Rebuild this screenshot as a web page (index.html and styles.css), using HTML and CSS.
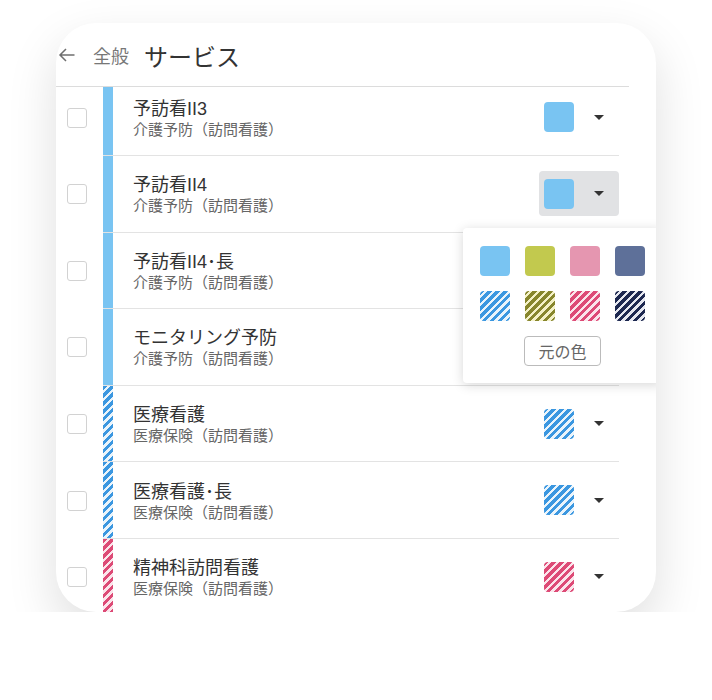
FILE: index.html
```html
<!DOCTYPE html>
<html lang="ja">
<head>
  <meta charset="UTF-8" />
  <title>サービス</title>
  <link rel="stylesheet" href="styles.css">
</head>
<body>

  <div class="stage">
    <div class="card">
      <header class="top-bar">
        <svg class="back" width="18" height="18" viewBox="0 0 18 18">
          <path d="M16.5 9H2M8 3L2 9l6 6" fill="none" stroke="#6f6f6f" stroke-width="1.5" />
        </svg>
        <span class="crumb">全般</span>
        <h1 class="page-title">サービス</h1>
      </header>

      <div class="list">
        <ul class="rows">
          <li class="row">
            <span class="check"></span>
            <div class="row-main">
              <span class="bar c-sky"></span>
              <div class="names">
                <div class="name">予訪看II3</div>
                <div class="kind">介護予防（訪問看護）</div>
              </div>
              <button class="color-btn"><span class="swatch c-sky"></span><span class="caret"></span></button>
            </div>
          </li>
          <li class="row">
            <span class="check"></span>
            <div class="row-main">
              <span class="bar c-sky"></span>
              <div class="names">
                <div class="name">予訪看II4</div>
                <div class="kind">介護予防（訪問看護）</div>
              </div>
              <button class="color-btn active"><span class="swatch c-sky"></span><span class="caret"></span></button>
            </div>
          </li>
          <li class="row">
            <span class="check"></span>
            <div class="row-main">
              <span class="bar c-sky"></span>
              <div class="names">
                <div class="name">予訪看II4･長</div>
                <div class="kind">介護予防（訪問看護）</div>
              </div>
              <button class="color-btn"><span class="swatch c-sky"></span><span class="caret"></span></button>
            </div>
          </li>
          <li class="row">
            <span class="check"></span>
            <div class="row-main">
              <span class="bar c-sky"></span>
              <div class="names">
                <div class="name">モニタリング予防</div>
                <div class="kind">介護予防（訪問看護）</div>
              </div>
              <button class="color-btn"><span class="swatch c-sky"></span><span class="caret"></span></button>
            </div>
          </li>
          <li class="row">
            <span class="check"></span>
            <div class="row-main">
              <span class="bar s-sky"></span>
              <div class="names">
                <div class="name">医療看護</div>
                <div class="kind">医療保険（訪問看護）</div>
              </div>
              <button class="color-btn"><span class="swatch s-sky"></span><span class="caret"></span></button>
            </div>
          </li>
          <li class="row">
            <span class="check"></span>
            <div class="row-main">
              <span class="bar s-sky"></span>
              <div class="names">
                <div class="name">医療看護･長</div>
                <div class="kind">医療保険（訪問看護）</div>
              </div>
              <button class="color-btn"><span class="swatch s-sky"></span><span class="caret"></span></button>
            </div>
          </li>
          <li class="row">
            <span class="check"></span>
            <div class="row-main">
              <span class="bar s-rose"></span>
              <div class="names">
                <div class="name">精神科訪問看護</div>
                <div class="kind">医療保険（訪問看護）</div>
              </div>
              <button class="color-btn"><span class="swatch s-rose"></span><span class="caret"></span></button>
            </div>
          </li>
        </ul>
      </div>

      <!-- color picker opened from the 2nd row -->
      <div class="palette">
        <div class="palette-grid">
          <span class="swatch c-sky"></span>
          <span class="swatch c-olive"></span>
          <span class="swatch c-rose"></span>
          <span class="swatch c-slate"></span>
          <span class="swatch s-sky"></span>
          <span class="swatch s-olive"></span>
          <span class="swatch s-rose"></span>
          <span class="swatch s-navy"></span>
        </div>
        <button class="reset">元の色</button>
      </div>
    </div>
  </div>

</body>
</html>
```

FILE: styles.css
```css
* {
  box-sizing: border-box;
}

body {
  margin: 0;
  background: #fff;
  font-family: "Liberation Sans", "Noto Sans CJK JP", sans-serif;
}

.stage {
  padding: 23px 0 0 56px;
}

.card {
  position: relative;
  width: 600px;
  height: 589px;
  background: #fff;
  border-radius: 40px;
  box-shadow: 0 20px 50px rgba(0,0,0,0.13);
  overflow: hidden;
  display: flex;
  flex-direction: column;
}

/* header */
.top-bar {
  flex: none;
  height: 64px;
  margin-right: 27px;
  padding: 1px 0 0 2px;
  border-bottom: 1px solid #dcdcdc;
  display: flex;
  align-items: center;
}

.back {
  margin-right: 17px;
}

.crumb {
  font-size: 18px;
  color: #777;
  margin-right: 15px;
}

.page-title {
  margin: 0;
  font-size: 24px;
  font-weight: normal;
  color: #333;
}

/* list */
.list {
  flex: 1;
  overflow: hidden;
}

.rows {
  list-style: none;
  margin: -7.6px 0 0;
  padding: 0;
}

.row {
  display: flex;
  height: 76.6px;
  padding-left: 11px;
  margin-right: 37px;
}

.check {
  align-self: center;
  width: 20px;
  height: 20px;
  border: 1px solid #d2d2d2;
  border-radius: 3px;
  margin-right: 16px;
}

.row-main {
  flex: 1;
  display: flex;
  align-items: center;
  border-bottom: 1px solid #e3e3e3;
}

.bar {
  align-self: stretch;
  width: 10px;
  margin-right: 20px;
}

.names {
  flex: 1;
  padding-top: 3px;
}

.name {
  font-size: 18px;
  line-height: 22px;
  color: #333;
}

.kind {
  font-size: 15px;
  line-height: 20px;
  color: #666;
}

.color-btn {
  display: flex;
  align-items: center;
  justify-content: space-between;
  width: 80px;
  height: 45px;
  padding: 0 15px 0 5px;
  border: none;
  border-radius: 4px;
  background: none;
}

.color-btn.active {
  background: #e1e2e4;
}

.swatch {
  display: block;
  width: 30px;
  height: 30px;
  border-radius: 4px;
}

.caret {
  width: 0;
  height: 0;
  border-left: 5px solid transparent;
  border-right: 5px solid transparent;
  border-top: 5px solid #333;
}

/* colors */
.c-sky { background: #79c4f2; }
.c-olive { background: #c2c94e; }
.c-rose { background: #e596b0; }
.c-slate { background: #5e7099; }

.s-sky { background: repeating-linear-gradient(135deg, #3b97e0 0 3px, #eaf4fb 3px 5.6px); }
.s-olive { background: repeating-linear-gradient(135deg, #87862c 0 3px, #f4f1c6 3px 5.6px); }
.s-rose { background: repeating-linear-gradient(135deg, #dd4a76 0 3px, #fbe4eb 3px 5.6px); }
.s-navy { background: repeating-linear-gradient(135deg, #1d2850 0 3px, #e6e8f0 3px 5.6px); }

/* picker */
.palette {
  position: absolute;
  left: 407px;
  top: 205px;
  width: 199px;
  padding: 18px 17px 17px;
  background: #fff;
  border-radius: 4px;
  box-shadow: 0 2px 12px rgba(0,0,0,0.16);
}

.palette-grid {
  display: grid;
  grid-template-columns: repeat(4, 30px);
  gap: 15px;
}

.reset {
  display: block;
  width: 77px;
  height: 30px;
  margin: 15px auto 0;
  padding: 0;
  border: 1px solid #bbb;
  border-radius: 4px;
  background: #fff;
  color: #666;
  font-family: inherit;
  font-size: 16px;
}
```
